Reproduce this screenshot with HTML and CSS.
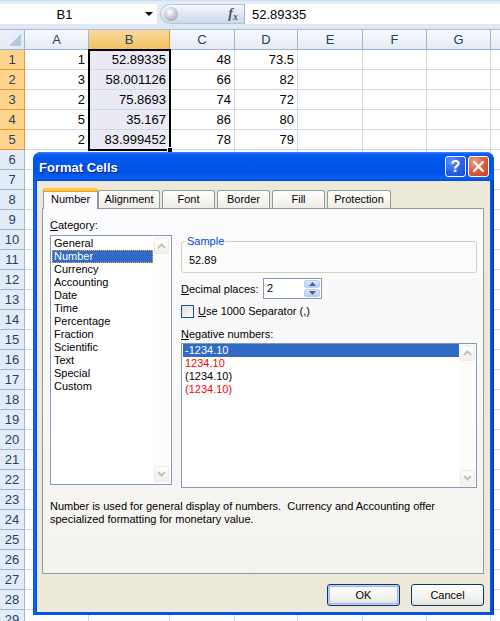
FILE: index.html
```html
<!DOCTYPE html>
<html>
<head>
<meta charset="utf-8">
<title>Format Cells</title>
<link rel="stylesheet" href="styles.css">
</head>
<body>
<div class="app">
  <div class="fbar">
    <div class="namebox"><span class="nb-text">B1</span><span class="nb-arrow"></span></div>
    <div class="fx-pill"><span class="knob"></span><span class="fx">f<sub>x</sub></span></div>
    <div class="finput">52.89335</div>
  </div>

  <div class="sheet">
    <div class="row head"><span class="corner"></span><span class="ch">A</span><span class="ch sel">B</span><span class="ch">C</span><span class="ch">D</span><span class="ch">E</span><span class="ch">F</span><span class="ch">G</span><span class="ch"></span></div>
    <div class="row"><span class="rh sel">1</span><span>1</span><span class="b">52.89335</span><span>48</span><span>73.5</span><span></span><span></span><span></span><span></span></div>
    <div class="row"><span class="rh sel">2</span><span>3</span><span class="b">58.001126</span><span>66</span><span>82</span><span></span><span></span><span></span><span></span></div>
    <div class="row"><span class="rh sel">3</span><span>2</span><span class="b">75.8693</span><span>74</span><span>72</span><span></span><span></span><span></span><span></span></div>
    <div class="row"><span class="rh sel">4</span><span>5</span><span class="b">35.167</span><span>86</span><span>80</span><span></span><span></span><span></span><span></span></div>
    <div class="row"><span class="rh sel">5</span><span>2</span><span class="b">83.999452</span><span>78</span><span>79</span><span></span><span></span><span></span><span></span></div>
    <div class="row"><span class="rh">6</span><span></span><span></span><span></span><span></span><span></span><span></span><span></span><span></span></div>
    <div class="row"><span class="rh">7</span><span></span><span></span><span></span><span></span><span></span><span></span><span></span><span></span></div>
    <div class="row"><span class="rh">8</span><span></span><span></span><span></span><span></span><span></span><span></span><span></span><span></span></div>
    <div class="row"><span class="rh">9</span><span></span><span></span><span></span><span></span><span></span><span></span><span></span><span></span></div>
    <div class="row"><span class="rh">10</span><span></span><span></span><span></span><span></span><span></span><span></span><span></span><span></span></div>
    <div class="row"><span class="rh">11</span><span></span><span></span><span></span><span></span><span></span><span></span><span></span><span></span></div>
    <div class="row"><span class="rh">12</span><span></span><span></span><span></span><span></span><span></span><span></span><span></span><span></span></div>
    <div class="row"><span class="rh">13</span><span></span><span></span><span></span><span></span><span></span><span></span><span></span><span></span></div>
    <div class="row"><span class="rh">14</span><span></span><span></span><span></span><span></span><span></span><span></span><span></span><span></span></div>
    <div class="row"><span class="rh">15</span><span></span><span></span><span></span><span></span><span></span><span></span><span></span><span></span></div>
    <div class="row"><span class="rh">16</span><span></span><span></span><span></span><span></span><span></span><span></span><span></span><span></span></div>
    <div class="row"><span class="rh">17</span><span></span><span></span><span></span><span></span><span></span><span></span><span></span><span></span></div>
    <div class="row"><span class="rh">18</span><span></span><span></span><span></span><span></span><span></span><span></span><span></span><span></span></div>
    <div class="row"><span class="rh">19</span><span></span><span></span><span></span><span></span><span></span><span></span><span></span><span></span></div>
    <div class="row"><span class="rh">20</span><span></span><span></span><span></span><span></span><span></span><span></span><span></span><span></span></div>
    <div class="row"><span class="rh">21</span><span></span><span></span><span></span><span></span><span></span><span></span><span></span><span></span></div>
    <div class="row"><span class="rh">22</span><span></span><span></span><span></span><span></span><span></span><span></span><span></span><span></span></div>
    <div class="row"><span class="rh">23</span><span></span><span></span><span></span><span></span><span></span><span></span><span></span><span></span></div>
    <div class="row"><span class="rh">24</span><span></span><span></span><span></span><span></span><span></span><span></span><span></span><span></span></div>
    <div class="row"><span class="rh">25</span><span></span><span></span><span></span><span></span><span></span><span></span><span></span><span></span></div>
    <div class="row"><span class="rh">26</span><span></span><span></span><span></span><span></span><span></span><span></span><span></span><span></span></div>
    <div class="row"><span class="rh">27</span><span></span><span></span><span></span><span></span><span></span><span></span><span></span><span></span></div>
    <div class="row"><span class="rh">28</span><span></span><span></span><span></span><span></span><span></span><span></span><span></span><span></span></div>
    <div class="row"><span class="rh">29</span><span></span><span></span><span></span><span></span><span></span><span></span><span></span><span></span></div>
    <div class="selection"><span class="handle"></span></div>
  </div>

  <div class="dialog">
    <div class="titlebar">
      <span class="title">Format Cells</span>
      <span class="tb-btn help">?</span>
      <span class="tb-btn close"><svg width="13" height="13" viewBox="0 0 13 13"><path d="M2 2 L11 11 M11 2 L2 11" stroke="#fff" stroke-width="2.4" stroke-linecap="round"/></svg></span>
    </div>
    <div class="dlg-body">
      <div class="tabs">
        <span class="tab active">Number</span>
        <span class="tab w-align">Alignment</span>
        <span class="tab w-font">Font</span>
        <span class="tab w-font">Border</span>
        <span class="tab w-font">Fill</span>
        <span class="tab w-prot">Protection</span>
      </div>
      <div class="panel">
        <div class="cols">
          <div class="col-left">
            <div class="lbl"><u>C</u>ategory:</div>
            <div class="listbox cat">
              <div class="items">
                <div class="item">General</div>
                <div class="item selected focus">Number</div>
                <div class="item">Currency</div>
                <div class="item">Accounting</div>
                <div class="item">Date</div>
                <div class="item">Time</div>
                <div class="item">Percentage</div>
                <div class="item">Fraction</div>
                <div class="item">Scientific</div>
                <div class="item">Text</div>
                <div class="item">Special</div>
                <div class="item">Custom</div>
              </div>
              <div class="vscroll">
                <span class="sbtn"><svg width="9" height="6" viewBox="0 0 9 6"><path d="M1 5 L4.5 1.5 L8 5" stroke="#c4c4b9" stroke-width="2" fill="none"/></svg></span>
                <span class="sbtn"><svg width="9" height="6" viewBox="0 0 9 6"><path d="M1 1 L4.5 4.5 L8 1" stroke="#c4c4b9" stroke-width="2" fill="none"/></svg></span>
              </div>
            </div>
          </div>
          <div class="col-right">
            <fieldset class="group">
              <legend>Sample</legend>
              <div class="sample">52.89</div>
            </fieldset>
            <div class="dec-row">
              <span class="dec-lbl"><u>D</u>ecimal places:</span>
              <span class="spin">
                <span class="spin-val">2</span>
                <span class="spin-btns">
                  <span class="sp up"><svg width="7" height="4" viewBox="0 0 7 4"><path d="M0 4 L3.5 0 L7 4 Z" fill="#4d6185"/></svg></span>
                  <span class="sp dn"><svg width="7" height="4" viewBox="0 0 7 4"><path d="M0 0 L3.5 4 L7 0 Z" fill="#4d6185"/></svg></span>
                </span>
              </span>
            </div>
            <div class="chk-row">
              <span class="chk"></span>
              <span><u>U</u>se 1000 Separator (,)</span>
            </div>
            <div class="lbl neg-lbl"><u>N</u>egative numbers:</div>
            <div class="listbox neg">
              <div class="items">
                <div class="item selected">-1234.10</div>
                <div class="item red">1234.10</div>
                <div class="item">(1234.10)</div>
                <div class="item red">(1234.10)</div>
              </div>
              <div class="vscroll">
                <span class="sbtn"><svg width="9" height="6" viewBox="0 0 9 6"><path d="M1 5 L4.5 1.5 L8 5" stroke="#c4c4b9" stroke-width="2" fill="none"/></svg></span>
                <span class="sbtn"><svg width="9" height="6" viewBox="0 0 9 6"><path d="M1 1 L4.5 4.5 L8 1" stroke="#c4c4b9" stroke-width="2" fill="none"/></svg></span>
              </div>
            </div>
          </div>
        </div>
        <p class="desc">Number is used for general display of numbers.&nbsp; Currency and Accounting offer<br>specialized formatting for monetary value.</p>
      </div>
      <div class="buttons">
        <span class="btn default">OK</span>
        <span class="btn">Cancel</span>
      </div>
    </div>
  </div>
</div>
</body>
</html>
```

FILE: styles.css
```css
* { box-sizing: border-box; }
html, body { margin: 0; padding: 0; }
body {
  width: 500px;
  height: 621px;
  overflow: hidden;
  background: #ffffff;
  font-family: "Liberation Sans", Arial, sans-serif;
}
.app { position: relative; width: 500px; height: 621px; overflow: hidden; }

/* formula bar */
.fbar {
  height: 30px;
  display: flex;
  padding: 4px 0 5px 0;
  background: linear-gradient(#c9d9ee 0, #e4edf8 2px, #dde8f5 100%);
  border-bottom: 1px solid #a7bcd6;
}
.namebox {
  width: 157px;
  background: #fff;
  display: flex;
  align-items: center;
  position: relative;
  font-size: 13px;
  color: #000;
}
.nb-text { flex: 1; text-align: center; padding-right: 16px; }
.nb-arrow {
  width: 0; height: 0;
  border-left: 4px solid transparent;
  border-right: 4px solid transparent;
  border-top: 4px solid #000;
  margin-right: 4px;
}
.fx-pill {
  margin-left: 3px;
  width: 84px;
  border-radius: 11px 0 0 11px;
  background: linear-gradient(#f7faff, #dbe5f3 55%, #cdd9ea);
  border: 1px solid #b4c5dc;
  border-right: none;
  display: flex;
  align-items: center;
  justify-content: space-between;
  padding: 0 6px 0 3px;
}
.knob {
  width: 14px; height: 14px; border-radius: 50%;
  background: radial-gradient(circle at 40% 35%, #ffffff 0, #c9ced6 45%, #8e97a4 100%);
}
.fx {
  font-family: "Liberation Serif", "Times New Roman", serif;
  font-style: italic;
  font-weight: bold;
  font-size: 14px;
  color: #555;
  line-height: 1;
}
.fx sub { font-size: 10px; vertical-align: -2px; }
.finput {
  flex: 1;
  background: #fff;
  border-left: 1px solid #9fb3cd;
  font-size: 13px;
  line-height: 21px;
  padding-left: 7px;
  color: #000;
}

/* sheet */
.sheet { position: relative; }
.row {
  display: grid;
  grid-template-columns: 25px 64px 81px 65px 63px 65px 64px 64px 40px;
  height: 20px;
}
.row > span {
  border-right: 1px solid #d0d7e5;
  border-bottom: 1px solid #d0d7e5;
  font-size: 13px;
  line-height: 19px;
  text-align: right;
  padding-right: 3px;
  color: #000;
  white-space: nowrap;
  overflow: hidden;
}
.row > span.b { background: #eaeaf4; }
.row.head > span {
  background: linear-gradient(#f8fafd, #e4ebf5);
  border-right: 1px solid #9eb6ce;
  border-bottom: 1px solid #9eb6ce;
  text-align: center;
  padding: 0;
  color: #27415f;
}
.row.head > span.sel {
  background: linear-gradient(#f9d99f, #f1c15f);
  border-right-color: #f29536;
  border-bottom-color: #f29536;
}
.row.head > span.corner {
  background: linear-gradient(135deg, #eef3fa 0, #dfe8f4 100%);
  position: relative;
}
.corner::after {
  content: "";
  position: absolute;
  right: 3px; bottom: 3px;
  width: 0; height: 0;
  border-left: 12px solid transparent;
  border-bottom: 12px solid #b4c8e0;
}
.row > span.rh {
  background: #e4ecf7;
  border-right: 1px solid #9eb6ce;
  border-bottom: 1px solid #9eb6ce;
  text-align: center;
  padding: 0;
  color: #27415f;
}
.row > span.rh.sel {
  background: #ffd58d;
  border-right-color: #f29536;
  border-bottom-color: #f29536;
}
.selection {
  position: absolute;
  left: 88px;
  top: 19px;
  width: 83px;
  height: 102px;
  border: 2px solid #000;
  pointer-events: none;
}
.handle {
  position: absolute;
  right: -4px;
  bottom: -4px;
  width: 6px; height: 6px;
  background: #000;
  border: 1px solid #fff;
}

/* dialog */
.dialog {
  position: absolute;
  left: 33px;
  top: 152px;
  width: 461px;
  height: 463px;
  display: flex;
  flex-direction: column;
  background: linear-gradient(90deg, #0831d9 0, #166aee 1px, #0055ea 3px, #0055ea calc(100% - 3px), #0a45d6 calc(100% - 1px), #001ea0 100%);
  border-radius: 8px 8px 0 0;
  font-family: "Liberation Sans", Arial, sans-serif;
  font-size: 11px;
  color: #000;
}
.titlebar {
  height: 29px;
  flex: none;
  display: flex;
  align-items: center;
  padding: 0 5px 0 6px;
  border-radius: 8px 8px 0 0;
  background: linear-gradient(#3a8dff 0, #0a5ff0 2px, #0058ee 5px, #0055e6 14px, #0053e3 22px, #0a62f5 26px, #0048d8 29px);
}
.title {
  flex: 1;
  color: #fff;
  font-weight: bold;
  font-size: 13px;
  text-shadow: 1px 1px 0 #0a1e8c;
  padding-top: 2px;
}
.tb-btn {
  width: 21px;
  height: 21px;
  border: 1px solid #fff;
  border-radius: 3px;
  display: flex;
  align-items: center;
  justify-content: center;
  margin-left: 2px;
}
.help {
  background: radial-gradient(circle at 30% 25%, #5b93ff 0, #2a64ea 50%, #1846d2 100%);
  color: #fff;
  font-weight: bold;
  font-size: 16px;
  font-family: "Liberation Sans", Arial, sans-serif;
}
.close {
  background: radial-gradient(circle at 30% 25%, #f2a089 0, #e0603e 45%, #c8401c 100%);
}
.dlg-body {
  flex: 1;
  margin: 0 4px 4px 4px;
  background: #ece9d8;
  padding: 7px 6px 6px 5px;
  display: flex;
  flex-direction: column;
}
.tabs {
  display: flex;
  align-items: flex-end;
  height: 20px;
  padding-left: 1px;
  position: relative;
  z-index: 1;
}
.tab {
  height: 18px;
  line-height: 17px;
  text-align: center;
  border: 1px solid #919b9c;
  border-bottom: none;
  border-radius: 3px 3px 0 0;
  background: linear-gradient(#ffffff, #f4f3ee 70%, #ecebe6);
  margin-left: 2px;
  width: 53px;
}
.tab.active {
  margin-left: 0;
  width: 55px;
  height: 21px;
  margin-bottom: -1px;
  background: #fcfcfe;
  border-top: 3px solid #ffc83c;
  box-shadow: inset 0 1px 0 #e8a02d;
  line-height: 17px;
  margin-right: -1px;
}
.tab.w-align { width: 62px; margin-left: 1px; }
.tab.w-font { width: 53px; }
.tab.w-prot { width: 64px; }
.panel {
  height: 366px;
  flex: none;
  border: 1px solid #919b9c;
  background: linear-gradient(#fcfcfe, #f4f3ee);
  padding: 10px 6px 0 7px;
}
.cols { display: flex; gap: 9px; }
.col-left { width: 122px; }
.col-right { width: 296px; padding-top: 16px; }
.lbl { line-height: 13px; height: 13px; }
.listbox {
  margin-top: 3px;
  border: 1px solid #7f9db9;
  background: #fff;
  display: flex;
  padding: 1px 1px 1px 1px;
}
.listbox.cat { height: 250px; }
.listbox.neg { height: 145px; padding: 0 0 0 1px; margin-top: 2px; }
.items { flex: 1; }
.item {
  line-height: 13px;
  height: 13px;
  padding-left: 2px;
  white-space: nowrap;
}
.item.selected { background: #316ac5; color: #fff; }
.item.focus { outline: 1px dotted #e6b04a; outline-offset: -1px; }
.item.red { color: #ff0000; }
.vscroll {
  width: 17px;
  display: flex;
  flex-direction: column;
  justify-content: space-between;
  background: #fcfcfb;
}
.sbtn {
  height: 16px;
  margin: 1px;
  border: 1px solid #eeede5;
  border-radius: 2px;
  background: linear-gradient(#fdfdfc, #f1f0ea);
  display: flex;
  align-items: center;
  justify-content: center;
}
.group {
  margin: 0;
  padding: 6px 7px 5px 7px;
  border: 1px solid #d0d0bf;
  border-radius: 3px;
  min-width: 0;
}
.group legend {
  padding: 0 1px;
  margin-left: -3px;
  color: #0046d5;
  line-height: 13px;
}
.sample { line-height: 13px; }
.dec-row {
  margin-top: 5px;
  height: 21px;
  display: flex;
  align-items: center;
}
.dec-lbl { width: 82px; }
.spin {
  width: 59px;
  height: 21px;
  border: 1px solid #7f9db9;
  background: #fff;
  display: flex;
  padding: 1px;
}
.spin-val { flex: 1; line-height: 17px; padding-left: 2px; }
.spin-btns {
  width: 16px;
  display: flex;
  flex-direction: column;
  gap: 1px;
}
.sp {
  flex: 1;
  border-radius: 2px;
  background: linear-gradient(#d8e4fd, #bccefa);
  border: 1px solid #bdcbf5;
  display: flex;
  align-items: center;
  justify-content: center;
}
.chk-row {
  margin-top: 6px;
  height: 13px;
  display: flex;
  align-items: center;
  gap: 4px;
  line-height: 13px;
}
.chk {
  width: 13px;
  height: 13px;
  border: 1px solid #1c5180;
  background: linear-gradient(135deg, #dcdcd7, #ffffff);
}
.neg-lbl { margin-top: 10px; }
.desc {
  margin: 12px 0 0 0;
  line-height: 13px;
}
.buttons {
  margin-top: 10px;
  display: flex;
  justify-content: flex-end;
  gap: 11px;
}
.btn {
  width: 73px;
  height: 22px;
  border: 1px solid #003c74;
  border-radius: 3px;
  background: linear-gradient(#ffffff, #f3f3ef 60%, #e3e1d6);
  text-align: center;
  line-height: 20px;
}
.btn.default {
  box-shadow: inset 0 0 0 1px #c0cdf4, inset 0 0 0 2px #a3b8ef;
}
```
